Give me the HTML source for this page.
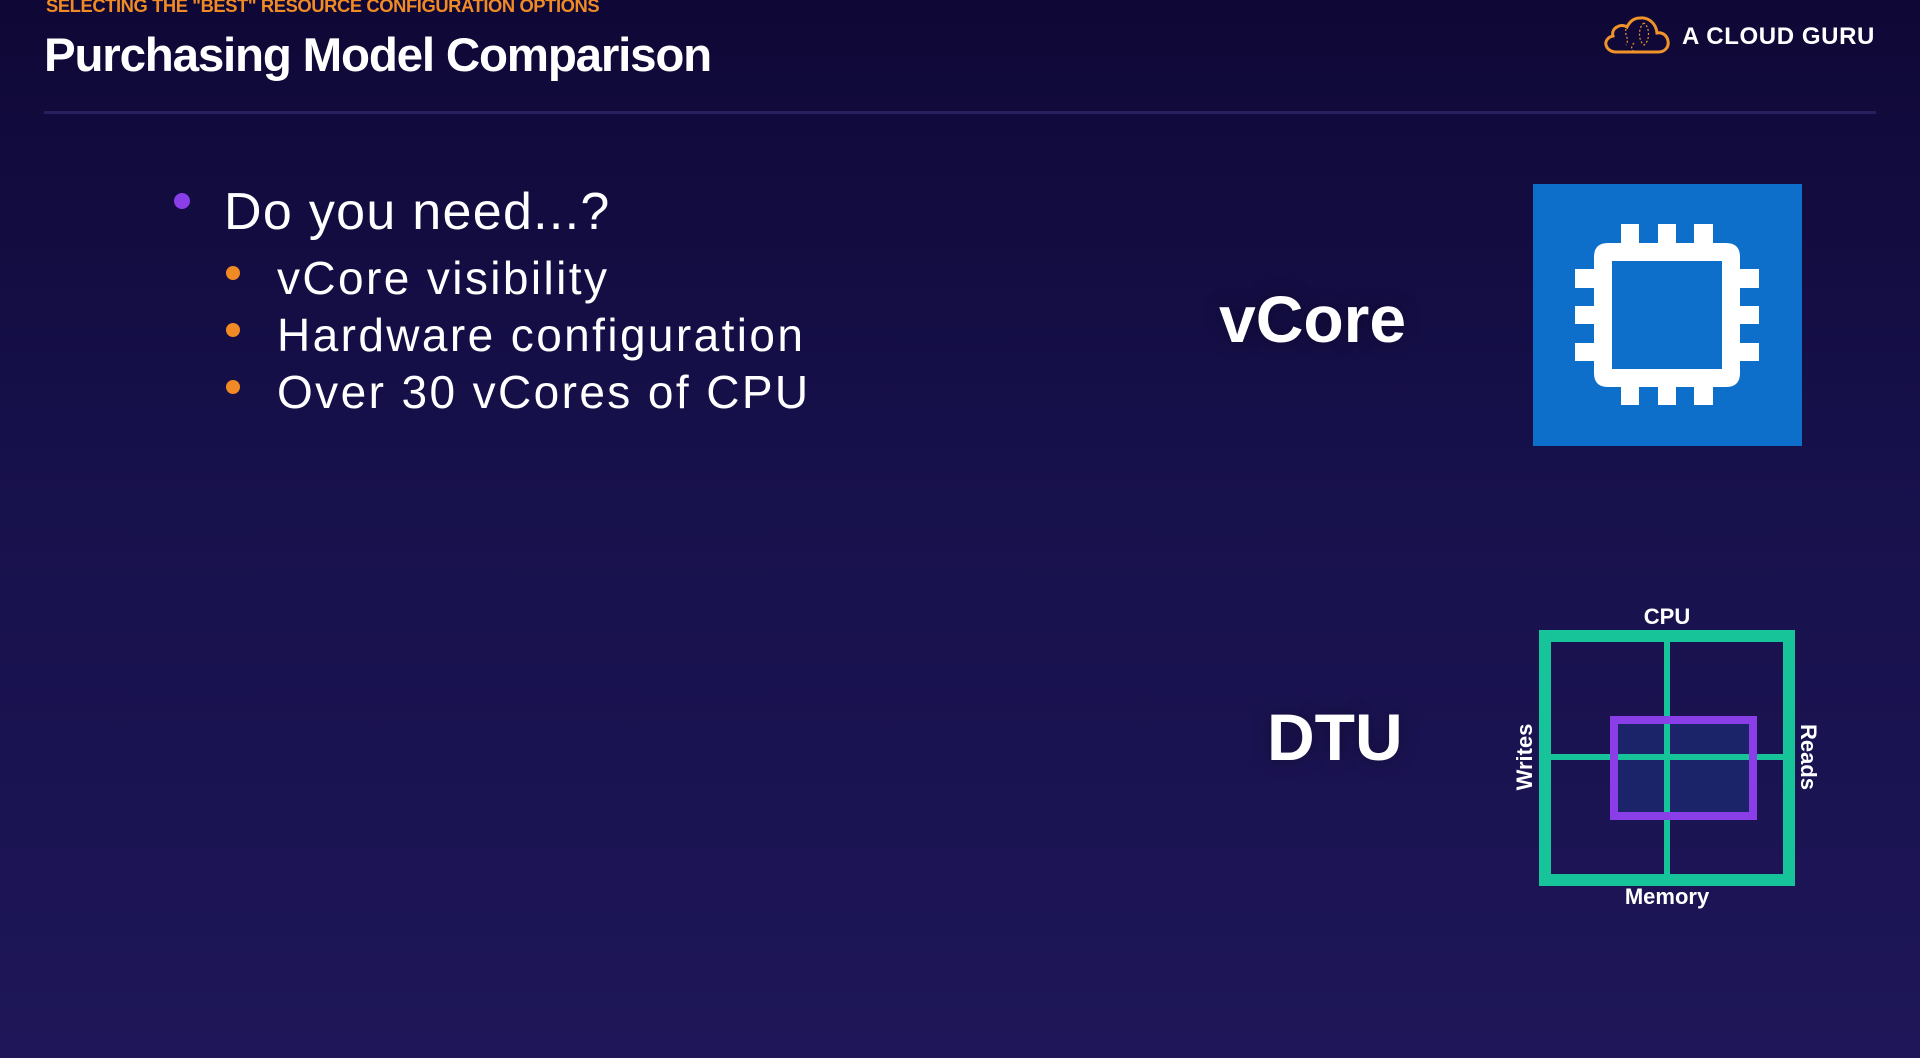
<!DOCTYPE html>
<html><head><meta charset="utf-8"><style>
html,body{margin:0;padding:0}
body{width:1920px;height:1058px;overflow:hidden;position:relative;background:linear-gradient(180deg,#0f0836 0%,#16104a 40%,#1e1658 100%);font-family:"Liberation Sans",sans-serif;color:#fff}
.a{position:absolute;white-space:nowrap}
.sub{left:46px;top:-4px;font-size:18px;font-weight:bold;color:#f08a24;letter-spacing:-0.4px;transform:scaleX(1.02);transform-origin:left}
.title{left:44px;top:28px;font-size:47.5px;font-weight:bold;letter-spacing:-1.2px}
.line{left:44px;top:111px;width:1832px;height:3px;background:#272060}
.b1{left:224px;top:186px;font-size:52px;line-height:1;letter-spacing:1.3px}
.li{font-size:46px;left:277px;line-height:1;letter-spacing:2.4px}
.dot{position:absolute;border-radius:50%}
.big{font-size:66px;font-weight:bold;line-height:1;text-shadow:0 0 18px rgba(0,0,0,0.35)}
.lab{font-size:22px;font-weight:bold;line-height:1}
</style></head><body>
<div class="a sub">SELECTING THE "BEST" RESOURCE CONFIGURATION OPTIONS</div>
<div class="a title">Purchasing Model Comparison</div>
<div class="a line"></div>

<svg class="a" style="left:1604px;top:15px" width="66" height="40" viewBox="0 0 66 40">
<path d="M12 37 H54 C62 37 65 31 64 26 C63 20 58 17 53 18 C52 8 44 2 36 3 C29 3 25 8 23 12 C20 10 16 10 13 12 C9 14 8 18 9 21 C4 22 1 26 2 30 C3 34 7 37 12 37 Z" fill="none" stroke="#f0932a" stroke-width="3"/>
<path d="M22 14 C20 20 26 24 22 30 M30 28 C26 32 28 36 30 36 M40 8 C34 12 34 26 40 30 C46 26 46 12 40 8" fill="none" stroke="#f0932a" stroke-width="1.2" stroke-dasharray="2 2"/>
</svg>
<div class="a" style="left:1682px;top:23px;font-size:24px;font-weight:bold;letter-spacing:0.6px">A CLOUD GURU</div>

<div class="dot" style="left:174px;top:193px;width:16px;height:16px;background:#8a3ee8"></div>
<div class="a b1">Do you need...?</div>
<div class="dot" style="left:226px;top:266px;width:14px;height:14px;background:#f08a24"></div>
<div class="dot" style="left:226px;top:323px;width:14px;height:14px;background:#f08a24"></div>
<div class="dot" style="left:226px;top:380px;width:14px;height:14px;background:#f08a24"></div>
<div class="a li" style="top:255px">vCore visibility</div>
<div class="a li" style="top:312px">Hardware configuration</div>
<div class="a li" style="top:369px">Over 30 vCores of CPU</div>

<div class="a big" style="left:1219px;top:286px">vCore</div>
<div class="a big" style="left:1267px;top:704px">DTU</div>

<svg class="a" style="left:1533px;top:184px" width="269" height="262" viewBox="0 0 269 262">
<rect width="269" height="262" fill="#0e6fcb"/>
<g fill="#fff" transform="translate(-1533,-184)">
<path fill-rule="evenodd" d="M1608 243 H1726 Q1740 243 1740 257 V373 Q1740 387 1726 387 H1608 Q1594 387 1594 373 V257 Q1594 243 1608 243 Z M1612 261 V369 H1722 V261 Z"/>
<rect x="1621" y="224" width="18" height="20"/><rect x="1658" y="224" width="18" height="20"/><rect x="1694" y="224" width="19" height="20"/>
<rect x="1621" y="386" width="18" height="19"/><rect x="1658" y="386" width="18" height="19"/><rect x="1694" y="386" width="19" height="19"/>
<rect x="1575" y="269" width="20" height="19"/><rect x="1575" y="306" width="20" height="18"/><rect x="1575" y="343" width="20" height="18"/>
<rect x="1739" y="269" width="20" height="19"/><rect x="1739" y="306" width="20" height="18"/><rect x="1739" y="343" width="20" height="18"/>
</g>
</svg>

<svg class="a" style="left:1500px;top:600px" width="340" height="320" viewBox="1500 600 340 320">
<rect x="1610" y="716" width="147" height="104" fill="#1b2468"/>
<line x1="1667" y1="636" x2="1667" y2="880" stroke="#17c49a" stroke-width="6"/>
<line x1="1545" y1="757" x2="1789" y2="757" stroke="#17c49a" stroke-width="6"/>
<rect x="1545" y="636" width="244" height="244" fill="none" stroke="#17c49a" stroke-width="12"/>
<rect x="1614" y="720" width="139" height="96" fill="none" stroke="#8a3ee8" stroke-width="8"/>
</svg>
<div class="a lab" style="left:1667px;top:606px;transform:translateX(-50%)">CPU</div>
<div class="a lab" style="left:1667px;top:886px;transform:translateX(-50%)">Memory</div>
<div class="a lab" style="left:1525px;top:757px;transform:translate(-50%,-50%) rotate(-90deg)">Writes</div>
<div class="a lab" style="left:1808px;top:757px;transform:translate(-50%,-50%) rotate(90deg)">Reads</div>
</body></html>
